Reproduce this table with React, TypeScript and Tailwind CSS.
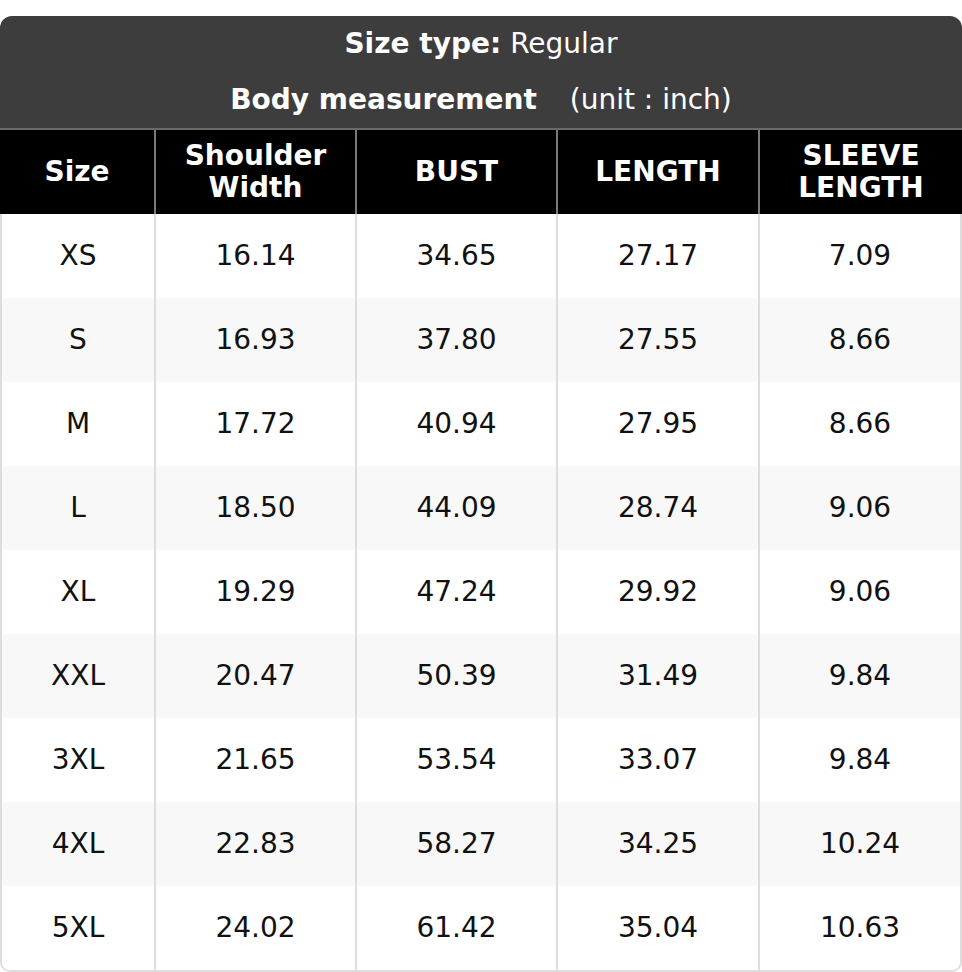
import React from "react";

const rows: string[][] = [
  ["XS", "16.14", "34.65", "27.17", "7.09"],
  ["S", "16.93", "37.80", "27.55", "8.66"],
  ["M", "17.72", "40.94", "27.95", "8.66"],
  ["L", "18.50", "44.09", "28.74", "9.06"],
  ["XL", "19.29", "47.24", "29.92", "9.06"],
  ["XXL", "20.47", "50.39", "31.49", "9.84"],
  ["3XL", "21.65", "53.54", "33.07", "9.84"],
  ["4XL", "22.83", "58.27", "34.25", "10.24"],
  ["5XL", "24.02", "61.42", "35.04", "10.63"],
];

export default function App() {
  return (
    <div
      className="w-[962px] h-[972px] bg-white pt-4"
      style={{ fontFamily: '"DejaVu Sans", sans-serif' }}
    >
      <div className="rounded-t-[12px] bg-[#3d3d3d] text-white text-[28px]">
        <div className="h-14 flex items-center justify-center">
          <span className="font-bold">Size type:</span>
          <span className="ml-[9px]">Regular</span>
        </div>
        <div className="h-14 flex items-center justify-center">
          <span className="font-bold">Body measurement</span>
          <span className="ml-[33px]">(unit : inch)</span>
        </div>
      </div>
      <div className="grid grid-cols-[154px_201px_201px_202px_204px] h-[86px] bg-black text-white font-bold text-[28px] leading-[32px] border-t-2 border-[#6a6a6a]">
        {["Size", "Shoulder\nWidth", "BUST", "LENGTH", "SLEEVE\nLENGTH"].map((h, i) => (
          <div
            key={i}
            className={`flex items-center justify-center text-center whitespace-pre-line ${i > 0 ? "border-l-2 border-[#7a7a7a]" : ""}`}
          >
            {h}
          </div>
        ))}
      </div>
      <div className="rounded-b-[10px] border-x-2 border-b-2 border-[#dddddd] overflow-hidden">
        {rows.map((r, ri) => (
          <div
            key={ri}
            className={`grid grid-cols-[152px_201px_201px_202px_202px] h-[84px] text-[28px] text-[#111] ${ri % 2 === 1 ? "bg-[#f8f8f8]" : "bg-white"}`}
          >
            {r.map((c, ci) => (
              <div
                key={ci}
                className={`flex items-center justify-center ${ci > 0 ? "border-l-2 border-[#dddddd]" : ""}`}
              >
                {c}
              </div>
            ))}
          </div>
        ))}
      </div>
    </div>
  );
}
